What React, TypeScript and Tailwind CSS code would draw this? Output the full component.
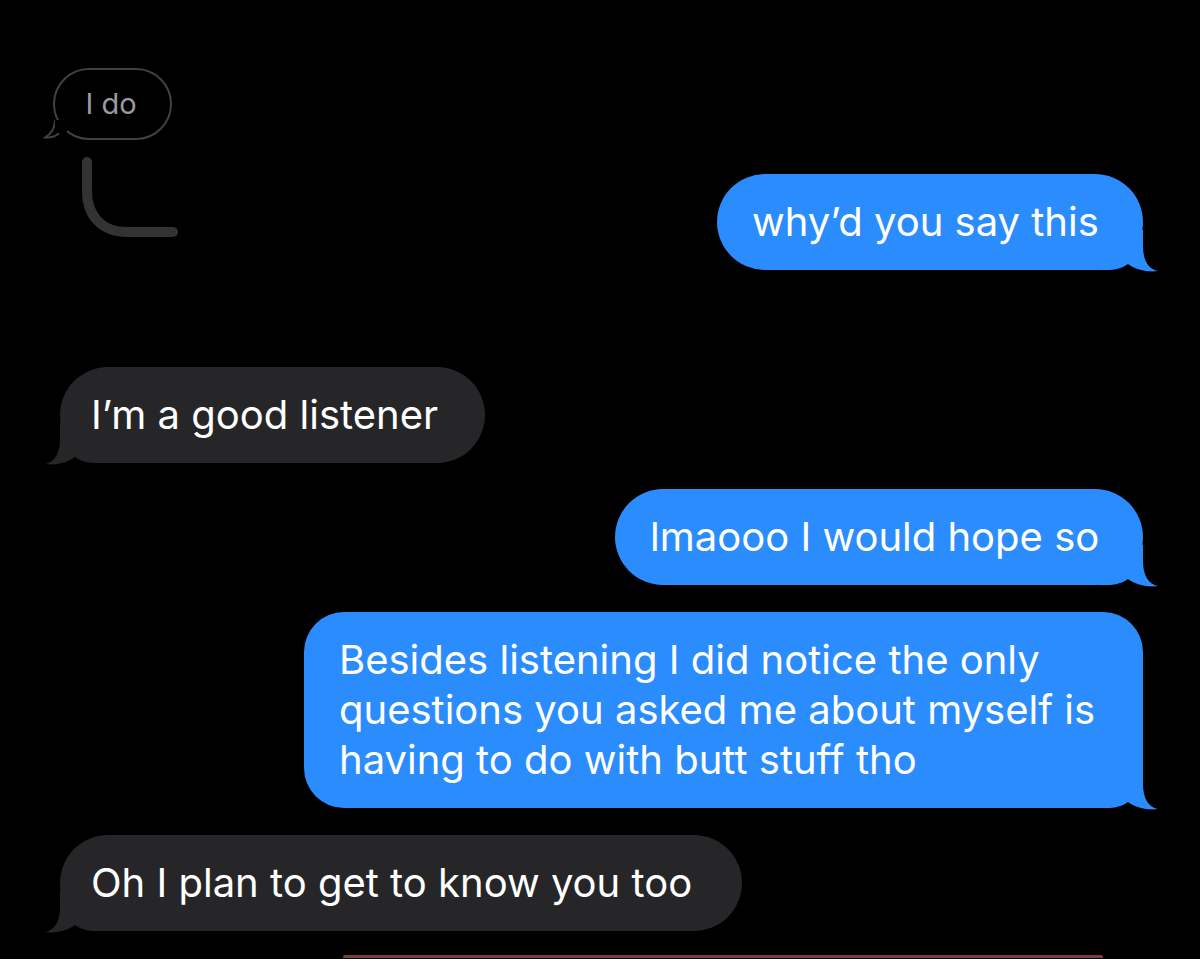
import React from 'react';

const BLUE = '#2b8cfd';
const GRAY = '#262628';

const Tail = ({ side, color }: { side: 'left' | 'right'; color: string }) => (
  <svg
    width="60"
    height="42"
    viewBox="0 0 60 42"
    className={
      side === 'right'
        ? 'absolute right-[-15px] bottom-[-2px]'
        : 'absolute left-[-15px] bottom-[-2px] -scale-x-100'
    }
  >
    <path
      d="M0 0 L45 0 L45 16 C45 30 50 39 60 41 C50 42.5 38 40 30 34 C24 38 18 40 8 40 L0 40 Z"
      fill={color}
    />
  </svg>
);

const Sent = ({ w, h = 96, mt, children }: { w: number; h?: number; mt: number; children: React.ReactNode }) => (
  <div className="flex justify-end pr-[57px]" style={{ marginTop: mt }}>
    <div
      className={`relative ${h > 96 ? 'rounded-[40px]' : 'rounded-[48px]'} bg-[#2b8cfd] text-white pl-[35px] flex items-center`}
      style={{ width: w, height: h }}
    >
      <div className="relative z-10">{children}</div>
      <Tail side="right" color={BLUE} />
    </div>
  </div>
);

const Received = ({ w, mt, children }: { w: number; mt: number; children: React.ReactNode }) => (
  <div className="flex pl-[60px]" style={{ marginTop: mt }}>
    <div
      className="relative rounded-[48px] bg-[#262628] text-white pl-[31px] flex items-center h-[96px]"
      style={{ width: w }}
    >
      <div className="relative z-10">{children}</div>
      <Tail side="left" color={GRAY} />
    </div>
  </div>
);

export default function App() {
  return (
    <div
      className="w-[1200px] h-[959px] bg-black overflow-hidden text-[40px] leading-[50px]"
      style={{ fontFamily: 'Inter, "Noto Sans", sans-serif' }}
    >
      {/* top row: quoted reply + first sent bubble */}
      <div className="flex justify-between items-start">
        <div className="pl-[53px] pt-[68px]">
          <div className="relative w-[119px] h-[72px] rounded-[36px] border-2 border-[#414144] flex items-center justify-center text-[29px] text-[#9b9ba0]">
            <span className="pr-[3px]">I do</span>
            <svg width="26" height="20" viewBox="0 0 26 20" className="absolute left-[-12px] bottom-[-2px]">
              <path d="M12 0 C12 8 8 14 2 17.5 C8 18 13 16 16 13" fill="#000" stroke="#414144" strokeWidth="2" />
              <rect x="12" y="0" width="12" height="13" fill="#000" />
            </svg>
          </div>
          <svg width="110" height="90" className="ml-[24px] mt-[16px]">
            <path d="M10 6 V35 C10 60 25 76 50 76 H96" fill="none" stroke="#333336" strokeWidth="10" strokeLinecap="round" />
          </svg>
        </div>
        <Sent w={426} mt={174}>why’d you say this</Sent>
      </div>

      <Received w={425} mt={97}>I’m a good listener</Received>

      <Sent w={528} mt={26}>lmaooo I would hope so</Sent>

      <Sent w={839} h={196} mt={27}>
        <div>Besides listening I did notice the only</div>
        <div>questions you asked me about myself is</div>
        <div>having to do with butt stuff tho</div>
      </Sent>

      <Received w={682} mt={27}>Oh I plan to get to know you too</Received>

      <div className="ml-[343px] mt-[24px] w-[760px] h-[3px] rounded-t-[2px] bg-[#7c3d3f]" />
    </div>
  );
}
